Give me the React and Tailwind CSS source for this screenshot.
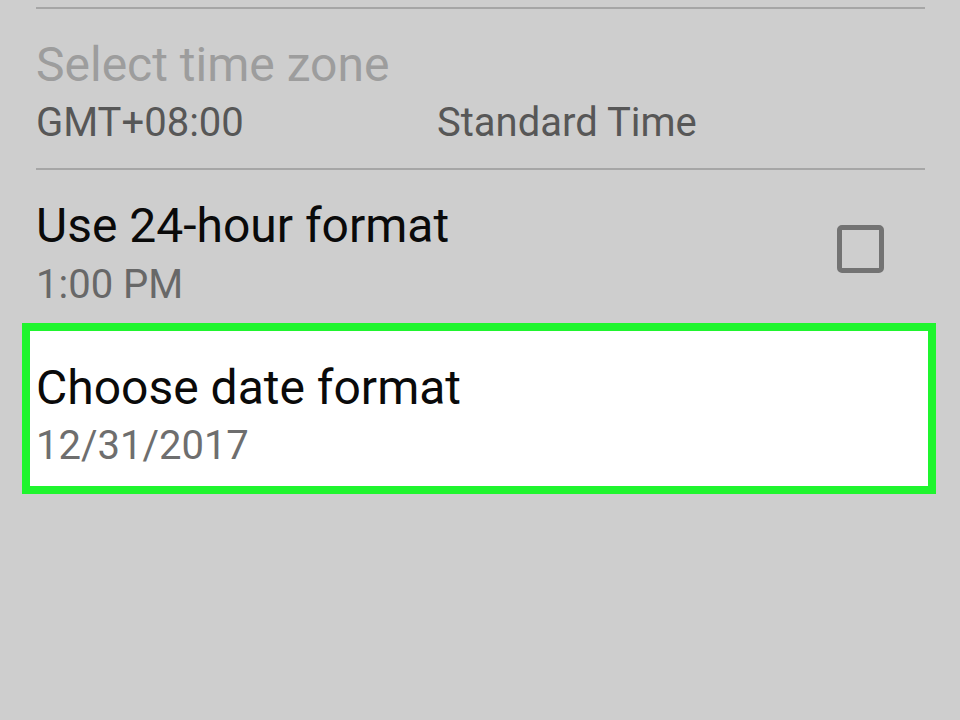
import React from "react";

function Divider() {
  return <div className="h-[2px] bg-[#a6a6a6]" />;
}

export default function App() {
  return (
    <div className="min-h-[720px] w-[960px] bg-[#cecece] font-['Roboto',sans-serif] overflow-hidden">
      <div className="pt-[7px] pl-[36px] pr-[35px]">
        <Divider />

        {/* Time zone (disabled) */}
        <div className="mt-[32px] text-[48px] leading-none text-[#9d9d9d] whitespace-nowrap">
          Select time zone
        </div>
        <div className="mt-[14px] flex text-[40px] leading-none text-[#575757] whitespace-nowrap">
          <span className="w-[401px]">GMT+08:00</span>
          <span>Standard Time</span>
        </div>

        <div className="mt-[25px]">
          <Divider />
        </div>

        {/* 24-hour toggle */}
        <div className="flex items-start justify-between">
          <div className="whitespace-nowrap">
            <div className="mt-[32px] text-[48px] leading-none text-[#0a0a0a]">
              Use 24-hour format
            </div>
            <div className="mt-[15px] text-[40px] leading-none text-[#686868]">
              1:00 PM
            </div>
          </div>
          <div className="mt-[55px] mr-[41px] h-[48px] w-[47px] rounded-[5px] border-[5px] border-[#737373]" />
        </div>
      </div>

      {/* Highlighted row */}
      <div className="mt-[18px] ml-[22px] mr-[24px] border-[8px] border-[#1ff52e] bg-white pl-[6px] pt-[33px] pb-[20px] whitespace-nowrap">
        <div className="text-[48px] leading-none text-[#0a0a0a]">Choose date format</div>
        <div className="mt-[14px] text-[40px] leading-none text-[#6e6e6e]">12/31/2017</div>
      </div>
    </div>
  );
}
